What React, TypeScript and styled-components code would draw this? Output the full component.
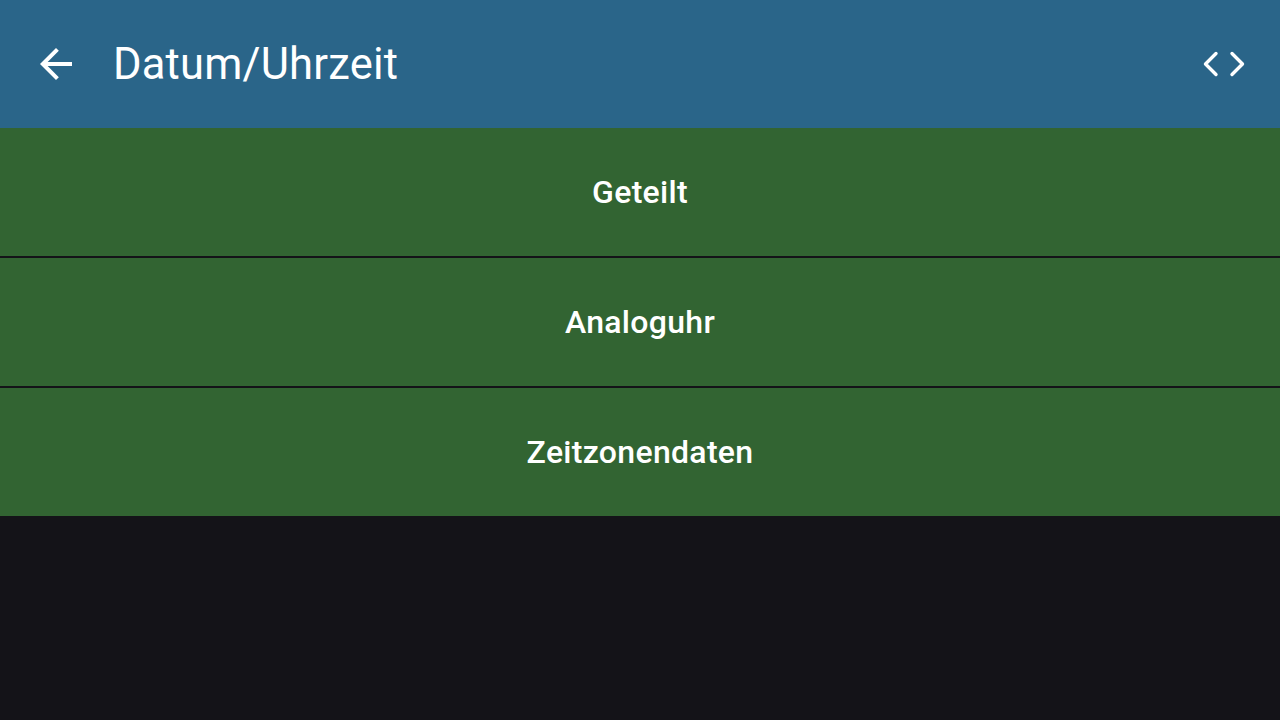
import styled, { createGlobalStyle } from "styled-components"

const GlobalStyle = createGlobalStyle`
    html, body {
        margin: 0;
        padding: 0;
        background: #141318;
        font-family: Roboto, "Noto Sans", sans-serif;
    }
`

const Screen = styled.div`
    width: 1280px;
    height: 720px;
    background: #141318;
    display: flex;
    flex-direction: column;
`
const TopBar = styled.header`
    height: 128px;
    background: #2a6589;
    display: flex;
    align-items: center;
    padding: 0 34px 0 32px;
    box-sizing: border-box;
    color: #ffffff;
`
const IconButton = styled.div`
    display: flex;
    align-items: center;
    justify-content: center;
`
const Title = styled.h1`
    margin: 0 0 0 33px;
    flex: 1;
    font-size: 43.5px;
    font-weight: 400;
    letter-spacing: 0.2px;
`
const List = styled.div`
    display: flex;
    flex-direction: column;
    gap: 2px;
`
const Item = styled.div`
    height: 128px;
    background: #326432;
    display: flex;
    align-items: center;
    justify-content: center;
    color: #ffffff;
    font-size: 32px;
    font-weight: 500;
    letter-spacing: 0.3px;
`

const items = ["Geteilt", "Analoguhr", "Zeitzonendaten"]

export default function App() {
    return (
        <>
            <GlobalStyle />
            <Screen>
                <TopBar>
                    <IconButton>
                        <svg width="48" height="48" viewBox="0 0 24 24">
                            <path
                                d="M20 11H7.83l5.59-5.59L12 4l-8 8 8 8 1.41-1.41L7.83 13H20v-2z"
                                fill="#ffffff"
                            />
                        </svg>
                    </IconButton>
                    <Title>Datum/Uhrzeit</Title>
                    <IconButton>
                        <svg width="44" height="26" viewBox="0 0 44 26">
                            <path
                                d="M14 2.5 L3.5 13 L14 23.5 M30 2.5 L40.5 13 L30 23.5"
                                stroke="#ffffff"
                                strokeWidth="3.4"
                                strokeLinecap="round"
                                strokeLinejoin="round"
                                fill="none"
                            />
                        </svg>
                    </IconButton>
                </TopBar>
                <List>
                    {items.map((label) => (
                        <Item key={label}>{label}</Item>
                    ))}
                </List>
            </Screen>
        </>
    )
}
